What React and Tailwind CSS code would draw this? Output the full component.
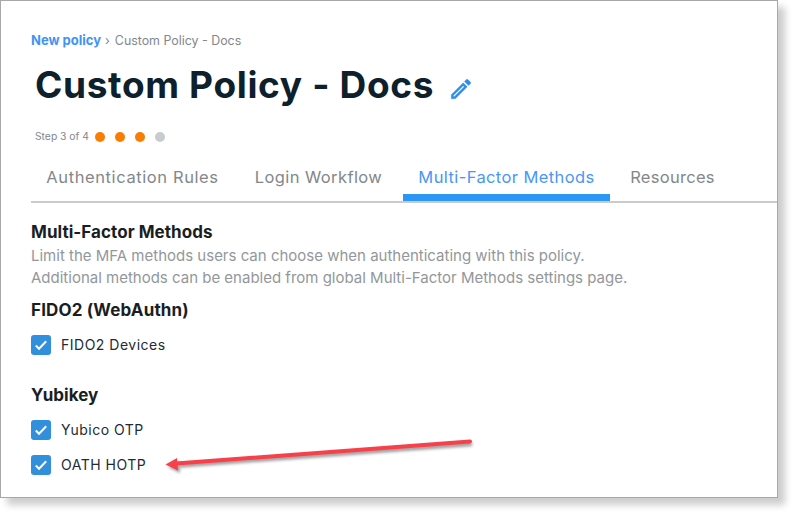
import React from "react";

const tabs = [
  { id: 1, label: "Authentication Rules", width: "w-[203px]", spacing: "tracking-[0.6px]" },
  { id: 2, label: "Login Workflow", width: "w-[159px]", spacing: "tracking-[0.4px]" },
  { id: 3, label: "Multi-Factor Methods", width: "w-[207px]", spacing: "tracking-[0.4px]", active: true },
  { id: 4, label: "Resources", width: "w-[115px]", spacing: "tracking-[0.3px]" },
];

const Check = ({ label }) => (
  <div className="flex items-center h-[20px] gap-[10px]">
    <div className="flex items-center justify-center w-[20px] h-[20px] rounded-[3px] bg-[#318fdc]">
      <svg width="14" height="14" viewBox="0 0 14 14" fill="none">
        <path d="M1.8 7.5L5 10.7L12.2 3.2" stroke="#fff" strokeWidth="2" />
      </svg>
    </div>
    <span className="text-[14px] tracking-[0.5px] text-[#222b33] -mt-px">{label}</span>
  </div>
);

const App = () => {
  return (
    <div className="relative w-[793px] h-[513px] bg-white font-['Inter',sans-serif] overflow-hidden">
      <div className="w-[778px] h-[498px] border border-[#a8a8a8] bg-white shadow-[7px_7px_7px_rgba(0,0,0,0.2)] pt-[32px] pl-[30px]">
        <div className="flex items-center h-[16px] text-[12.4px] text-[#83878b]">
          <span className="text-[13px] font-bold text-[#3f94f5]">New policy</span>
          <span className="ml-[4px] mr-[5px]">›</span>
          <span>Custom Policy - Docs</span>
        </div>

        <div className="flex items-center h-[44px] mt-[14px] ml-[4px]">
          <h1 className="text-[37px] font-bold tracking-[0.65px] text-[#0e202c]">Custom Policy - Docs</h1>
          <svg className="ml-[14px] mt-[8px]" width="26" height="26" viewBox="0 0 24 24" fill="#2f8fe8" stroke="#2f8fe8" strokeWidth="0.3">
            <path d="M3 17.25V21h3.75L17.81 9.94l-3.75-3.75L3 17.25zM5.92 19H5v-.92l9.06-9.06.92.92L5.92 19zM20.71 7.04a1 1 0 0 0 0-1.41l-2.34-2.34a1 1 0 0 0-1.41 0l-1.83 1.83 3.75 3.75 1.83-1.83z" />
          </svg>
        </div>

        <div className="flex items-center h-[12px] mt-[24px] ml-[4px]">
          <span className="text-[10.3px] text-[#83878b] mr-[6px]">Step 3 of 4</span>
          <div className="flex gap-[10px]">
            <div className="w-[10px] h-[10px] rounded-full bg-[#f97d00]" />
            <div className="w-[10px] h-[10px] rounded-full bg-[#f97d00]" />
            <div className="w-[10px] h-[10px] rounded-full bg-[#f97d00]" />
            <div className="w-[10px] h-[10px] rounded-full bg-[#c8ccce]" />
          </div>
        </div>

        <div className="flex gap-[5px] h-[45px] mt-[13px] border-b-2 border-[#c8ccce] box-content">
          {tabs.map(({ id, label, width, spacing, active }) => (
            <div
              key={id}
              className={`flex items-start justify-center pt-[9px] text-[16.5px] ${spacing} ${width} ${
                active ? "border-b-[7px] border-[#2b96f3] text-[#4a97f5]" : "text-[#83878b]"
              }`}
            >
              {label}
            </div>
          ))}
        </div>

        <h2 className="text-[17px] font-bold tracking-[0.05px] leading-[20px] mt-[19px] text-[#1a1e22]">Multi-Factor Methods</h2>
        <p className="text-[15px] leading-[22px] mt-[3px] text-[#93979b]">
          Limit the MFA methods users can choose when authenticating with this policy.
          <br />
          Additional methods can be enabled from global Multi-Factor Methods settings page.
        </p>

        <h2 className="text-[17px] font-bold tracking-[0.15px] leading-[20px] mt-[11px] text-[#1a1e22]">FIDO2 (WebAuthn)</h2>
        <div className="mt-[15px]">
          <Check label="FIDO2 Devices" />
        </div>

        <h2 className="text-[17px] font-bold leading-[20px] mt-[30px] text-[#1a1e22]">Yubikey</h2>
        <div className="flex flex-col gap-[15px] mt-[15px]">
          <Check label="Yubico OTP" />
          <Check label="OATH HOTP" />
        </div>
      </div>

      <svg className="absolute left-0 top-0 pointer-events-none" width="793" height="513" viewBox="0 0 793 513" fill="none">
        <g opacity="0.5" transform="translate(2 3)" style={{ filter: "blur(1.5px)" }}>
          <path d="M470 441L178 462.5" stroke="#333" strokeWidth="4" />
          <path d="M166 464L177 458L178 470Z" fill="#333" />
        </g>
        <path d="M470 441.5L176 463.5" stroke="#f8404a" strokeWidth="4" strokeLinecap="round" />
        <path d="M165.5 464.5L177 458L178 470.5Z" fill="#f8404a" />
      </svg>
    </div>
  );
};

export default App;
